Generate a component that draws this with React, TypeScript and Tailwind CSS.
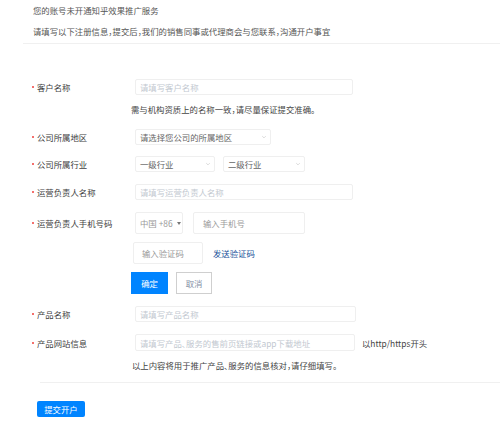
import * as React from "react"

const font = { fontFamily: '"Noto Sans CJK SC", "Noto Sans", sans-serif' }

function Chevron({ className }: { className?: string }) {
  return (
    <svg viewBox="0 0 10 6" className={className} fill="none" stroke="currentColor" strokeWidth="1">
      <path d="M2 1.5 L5 4.5 L8 1.5" />
    </svg>
  )
}

// one labelled row of the form
function Row({ label, children }: { label: string; children: React.ReactNode }) {
  return (
    <div className="flex items-center pl-[32px]">
      <div className="flex w-[103px] items-center">
        <span className="h-[2px] w-[2px] rounded-full bg-[#f1403c]" />
        <span className="ml-[3px] text-[#404040]">{label}</span>
      </div>
      <div className="flex items-center">{children}</div>
    </div>
  )
}

function TextInput({ placeholder, className }: { placeholder: string; className?: string }) {
  return (
    <div className={"flex items-center rounded-[2px] border border-[#efefef] pl-[4px] text-[#c2c8d0] " + (className ?? "")}>
      {placeholder}
    </div>
  )
}

function Select({ value, className }: { value: string; className?: string }) {
  return (
    <div className={"flex items-center justify-between rounded-[2px] border border-[#efefef] pl-[4px] pr-[3px] text-[#666] " + (className ?? "")}>
      <span>{value}</span>
      <Chevron className="h-[4px] w-[6px] text-[#c4c4c4]" />
    </div>
  )
}

export default function App() {
  return (
    <div
      className="h-[433px] w-[500px] overflow-hidden bg-white text-[8.4px] leading-[12px] [font-feature-settings:'halt']"
      style={font}
    >
      {/* notice */}
      <div className="pl-[33px] pt-[4px] text-[#555]">
        <div>您的账号未开通知乎效果推广服务</div>
        <div className="mt-[9px]">请填写以下注册信息，提交后，我们的销售同事或代理商会与您联系，沟通开户事宜</div>
      </div>
      <div className="ml-[23px] mt-[6px] h-px bg-[#f0f0f0]" />

      <div className="mt-[35px]">
        <Row label="客户名称">
          <TextInput placeholder="请填写客户名称" className="h-[16px] w-[218px]" />
        </Row>
        <div className="mt-[8px] pl-[131px] text-[#444]">需与机构资质上的名称一致，请尽量保证提交准确。</div>

        <div className="mt-[14px]">
          <Row label="公司所属地区">
            <Select value="请选择您公司的所属地区" className="h-[16px] w-[136px]" />
          </Row>
        </div>

        <div className="mt-[11px]">
          <Row label="公司所属行业">
            <Select value="一级行业" className="h-[16px] w-[80px]" />
            <Select value="二级行业" className="ml-[8px] h-[16px] w-[82px]" />
          </Row>
        </div>

        <div className="mt-[12px]">
          <Row label="运营负责人名称">
            <TextInput placeholder="请填写运营负责人名称" className="h-[16px] w-[218px]" />
          </Row>
        </div>

        <div className="mt-[12px]">
          <Row label="运营负责人手机号码">
            <div className="flex h-[22px] w-[48px] items-center rounded-[2px] border border-[#efefef] pl-[4px] text-[#999]">
              <span>中国 +86</span>
              <span className="ml-[4px] h-0 w-0 border-x-[2px] border-t-[3px] border-x-transparent border-t-[#777]" />
            </div>
            <div className="ml-[10px] flex h-[22px] w-[112px] items-center rounded-[2px] border border-[#efefef] pl-[9px] text-[#999]">
              输入手机号
            </div>
          </Row>
        </div>

        <div className="mt-[8px] flex items-center pl-[133px]">
          <div className="flex h-[22px] w-[70px] items-center rounded-[2px] border border-[#efefef] pl-[8px] text-[#999]">
            输入验证码
          </div>
          <span className="ml-[10px] text-[#175199]">发送验证码</span>
        </div>

        <div className="mt-[8px] flex items-center pl-[131px]">
          <button className="flex h-[22px] w-[37px] items-center justify-center bg-[#0084ff] text-white">确定</button>
          <button className="ml-[8px] flex h-[22px] w-[36px] items-center justify-center border border-[#cfcfcf] text-[#8590a6]">
            取消
          </button>
        </div>

        <div className="mt-[12px]">
          <Row label="产品名称">
            <TextInput placeholder="请填写产品名称" className="h-[16px] w-[221px]" />
          </Row>
        </div>

        <div className="mt-[12px]">
          <Row label="产品网站信息">
            <TextInput
              placeholder="请填写产品、服务的售前页链接或app下载地址"
              className="h-[17px] w-[220px]"
            />
            <span className="ml-[7px] text-[#444]">以http/https开头</span>
          </Row>
        </div>
        <div className="mt-[8px] pl-[132px] text-[#444]">以上内容将用于推广产品、服务的信息核对，请仔细填写。</div>
      </div>

      <div className="ml-[40px] mt-[11px] h-px bg-[#f0f0f0]" />

      <div className="mt-[18px] pl-[37px]">
        <button className="flex h-[16px] w-[48px] items-center justify-center rounded-[2px] bg-[#0084ff] text-white">
          提交开户
        </button>
      </div>
    </div>
  )
}
